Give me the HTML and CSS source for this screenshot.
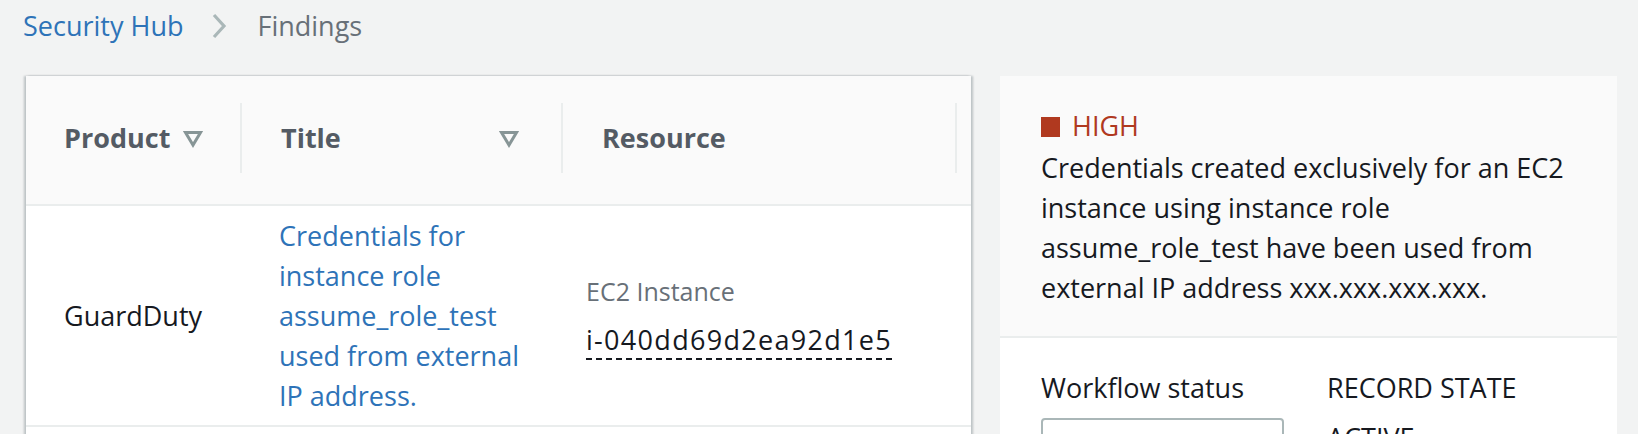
FILE: index.html
```html
<!DOCTYPE html>
<html lang="en">
<head>
<meta charset="utf-8">
<title>Security Hub - Findings</title>
<link rel="stylesheet" href="styles.css">
</head>
<body>
<nav class="crumbs">
  <a class="crumb-link" href="#">Security Hub</a>
  <svg class="crumb-sep" width="16" height="28" viewBox="0 0 16 28"><path d="M3 3 L13 14 L3 25" fill="none" stroke="#aab7b8" stroke-width="3.2"/></svg>
  <span class="crumb-current">Findings</span>
</nav>
<main class="layout">
  <section class="table">
    <div class="th th-first">
      <div class="th-inner">
        <span class="th-label">Product</span>
        <svg class="filter" width="20" height="18" viewBox="0 0 20 18"><path d="M2.5 2.5 H17.5 L10 15 Z" fill="none" stroke="#879596" stroke-width="3" stroke-linejoin="miter"/></svg>
      </div>
    </div>
    <div class="th">
      <div class="th-inner th-split">
        <span class="th-label">Title</span>
        <svg class="filter" width="20" height="18" viewBox="0 0 20 18"><path d="M2.5 2.5 H17.5 L10 15 Z" fill="none" stroke="#879596" stroke-width="3" stroke-linejoin="miter"/></svg>
      </div>
    </div>
    <div class="th">
      <div class="th-inner">
        <span class="th-label">Resource</span>
      </div>
    </div>
    <div class="th th-last">
      <div class="th-inner"></div>
    </div>

    <div class="td td-product">GuardDuty</div>
    <div class="td td-title"><a class="link" href="#">Credentials for instance role assume_role_test used from external IP address.</a></div>
    <div class="td td-resource">
      <div class="res-type">EC2 Instance</div>
      <div class="res-id"><span class="dashed">i-040dd69d2ea92d1e5</span></div>
    </div>
    <div class="td"></div>

    <div class="td-next"></div>
  </section>

  <aside class="panel">
    <div class="panel-head">
      <div class="severity"><span class="sev-square"></span><span>HIGH</span></div>
      <p class="desc">Credentials created exclusively for an EC2 instance using instance role assume_role_test have been used from external IP address xxx.xxx.xxx.xxx.</p>
    </div>
    <div class="panel-body">
      <div class="field field-workflow">
        <div class="field-label">Workflow status</div>
        <div class="select"></div>
      </div>
      <div class="field">
        <div class="field-label">RECORD STATE</div>
        <div class="field-value">ACTIVE</div>
      </div>
    </div>
  </aside>
</main>
</body>
</html>
```

FILE: styles.css
```css
html, body {
  margin: 0;
  padding: 0;
  background: #f2f3f3;
  font-family: "Open Sans", "Noto Sans", sans-serif;
  font-size: 27px;
  line-height: 40px;
  color: #16191f;
  overflow: hidden;
  height: 434px;
}

.crumbs {
  display: flex;
  align-items: center;
  height: 40px;
  padding: 6px 0 0 23px;
}
.crumb-link {
  color: #2e73b8;
  text-decoration: none;
  font-size: 27px;
}
.crumb-sep {
  margin: 0 30px 0 28px;
}
.crumb-current {
  color: #687078;
  font-size: 27px;
}

.layout {
  display: flex;
  align-items: flex-start;
  gap: 29px;
  padding: 30px 0 0 26px;
}

/* ---------- table ---------- */
.table {
  display: grid;
  grid-template-columns: 214px 321px 394px 16px;
  width: 945px;
  background: #ffffff;
  box-shadow: -2px 0 2px rgba(0, 28, 36, 0.22), 2px 0 2px rgba(0, 28, 36, 0.22);
}
.th {
  height: 128px;
  display: flex;
  align-items: center;
  background: #fafafa;
  border-bottom: 2px solid #eaeded;
}
.th-inner {
  display: flex;
  align-items: center;
  height: 70px;
  width: 100%;
  border-left: 2px solid #eaeded;
  padding-left: 39px;
  box-sizing: border-box;
  margin-top: -4px;
}
.th-first .th-inner {
  border-left: none;
  padding-left: 38px;
  gap: 13px;
}
.th-split {
  justify-content: space-between;
  padding-right: 42px;
}
.th-label {
  font-weight: 700;
  color: #545b64;
  font-size: 27px;
}
.filter {
  display: block;
  margin-top: 2px;
}

.td {
  display: flex;
  align-items: center;
  padding: 10px 0 9px;
  border-bottom: 2px solid #eaeded;
}
.td-product {
  padding-left: 38px;
}
.td-title {
  padding-left: 39px;
  padding-right: 24px;
}
.link {
  color: #2e73b8;
  text-decoration: none;
}
.td-resource {
  flex-direction: column;
  align-items: flex-start;
  justify-content: center;
  padding-left: 25px;
}
.res-type {
  color: #687078;
  font-size: 25px;
  line-height: 32px;
  margin-bottom: 15px;
}
.res-id {
  line-height: 36px;
  letter-spacing: 1.3px;
}
.dashed {
  border-bottom: 2px dashed #16191f;
}
.td-next {
  grid-column: 1 / -1;
  height: 40px;
}

/* ---------- side panel ---------- */
.panel {
  width: 617px;
  background: #ffffff;
}
.panel-head {
  background: #fafafa;
  padding: 30px 40px 28px 41px;
  border-bottom: 2px solid #eaeded;
}
.severity {
  display: flex;
  align-items: center;
  gap: 12px;
  color: #b0391f;
  font-size: 27px;
}
.sev-square {
  width: 19px;
  height: 20px;
  background: #b0391f;
  margin-top: 2px;
}
.desc {
  margin: 2px 0 0;
}
.panel-body {
  display: flex;
  gap: 43px;
  padding: 30px 41px 0;
}
.field-workflow {
  width: 243px;
}
.field-label {
  font-size: 27px;
}
.select {
  margin-top: 10px;
  height: 44px;
  border: 2px solid #aab7b8;
  border-radius: 4px;
  background: #fff;
}
.field-value {
  margin-top: 10px;
}
```
